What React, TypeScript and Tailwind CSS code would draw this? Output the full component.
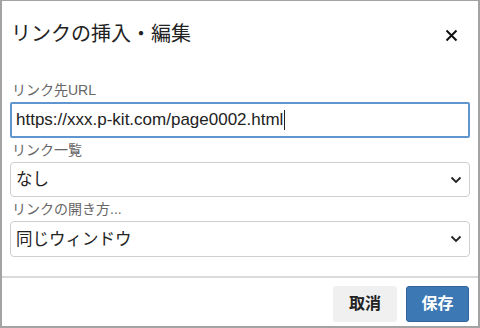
import React from "react";

const font = { fontFamily: '"Liberation Sans", "Noto Sans CJK JP", sans-serif' };

function Chevron() {
  return (
    <svg width="12" height="8" viewBox="0 0 12 8" className="shrink-0">
      <path d="M1.5 1.5 L6 6 L10.5 1.5" fill="none" stroke="#222" strokeWidth="1.8" />
    </svg>
  );
}

export default function App() {
  return (
    <div
      className="w-[480px] h-[328px] bg-white border-x-2 border-t border-b-2 border-[#a3a3a3] flex flex-col text-[#222]"
      style={font}
    >
      <div className="h-[77px] flex items-start justify-between pl-[9px] pr-[20px] pt-[20px]">
        <div className="text-[20px] leading-[26px] text-[#222]">リンクの挿入・編集</div>
        <svg width="13" height="13" viewBox="0 0 13 13" className="mt-[8px]">
          <path d="M1.5 1.5 L11.5 11.5 M11.5 1.5 L1.5 11.5" stroke="#111" strokeWidth="2" />
        </svg>
      </div>
      <div className="px-[8px] flex flex-col">
        <label className="h-[24px] text-[14px] leading-[24px] text-[#666] pl-[2px]">リンク先URL</label>
        <div className="h-[36px] border-2 border-[#6096cf] rounded-[2px] flex items-center px-[4px] text-[17px] text-[#222]">
          <span>https://xxx.p-kit.com/page0002.html</span>
          <span className="w-px h-[20px] bg-[#222] ml-[1px]" />
        </div>
        <label className="h-[24px] text-[14px] leading-[24px] text-[#666] pl-[2px]">リンク一覧</label>
        <div className="h-[35px] border border-[#cfcfcf] rounded-[4px] flex items-center justify-between pl-[5px] pr-[7px] text-[16.5px] text-[#222]">
          <span>なし</span>
          <Chevron />
        </div>
        <label className="h-[24px] text-[14px] leading-[24px] text-[#666] pl-[2px]">リンクの開き方...</label>
        <div className="h-[36px] border border-[#cfcfcf] rounded-[4px] flex items-center justify-between pl-[5px] pr-[7px] text-[16.5px] text-[#222]">
          <span>同じウィンドウ</span>
          <Chevron />
        </div>
      </div>
      <div className="mt-auto border-t-2 border-[#dadada] h-[50px] flex items-start justify-end gap-[9px] pr-[9px] pt-[8px]">
        <button className="w-[64px] h-[36px] rounded-[3px] bg-[#f0f0f0] text-[16px] font-bold text-[#222]">取消</button>
        <button className="w-[63px] h-[36px] rounded-[3px] bg-[#3c78b4] border border-[#2f649c] text-[16px] font-bold text-white">保存</button>
      </div>
    </div>
  );
}
